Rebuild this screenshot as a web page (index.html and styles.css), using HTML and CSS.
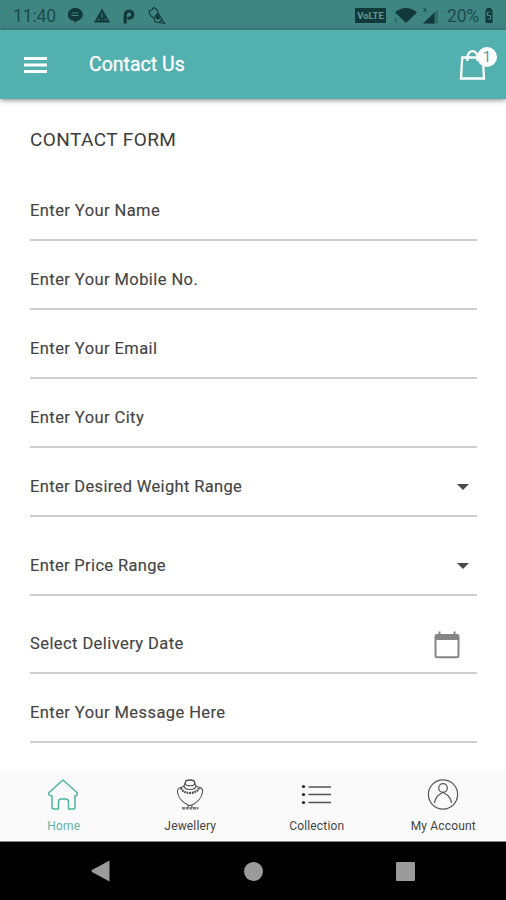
FILE: index.html
```html
<!DOCTYPE html>
<html lang="en">
<head>
<meta charset="utf-8">
<title>Contact Us</title>
<link rel="stylesheet" href="styles.css">
</head>
<body>
<div class="status">
  <span class="clock">11:40</span>
  <svg class="notices" width="98" height="20" viewBox="0 0 98 20">
    <path fill="#12393a" d="M7 2a7 6.500 0 0 1 1.500 13l-2 3v-3A7 6.500 0 0 1 7 2z"/>
    <path stroke="#3f8582" d="M3.500 7h7M3.500 9.500h7"/>
    <path fill="#12393a" d="M34 2.500l8 14H26z"/>
    <path stroke="#3f8582" stroke-width="1.200" d="M34 7v5M34 13.500v1.200M31 12.500l-1 2M37 12.500l1 2"/>
    <path fill="none" stroke="#12393a" stroke-width="3.200" d="M57.200 17.500V10q0-5 4-5a3.600 3.600 0 0 1 0 7.200H59.500"/>
    <path fill="none" stroke="#12393a" stroke-width="1.100" stroke-linejoin="round" d="M81 5l3-1 1.500-2.500 3.500 2 1 3.500-4 5-3-2-1.500-2.500zM90 7l4 6-3 3.500-4-.500-1-4M91 16.500l3-2.500 3 3.500-3-.500z"/>
    <path fill="#12393a" d="M87 10l3-2 2.500 4-3.500 2z"/>
  </svg>
  <span class="volte">VoLTE</span>
  <svg class="signals" width="46" height="20" viewBox="0 0 46 20">
    <path fill="#12393a" d="M1 6.500C7 .5 17 .5 23 6.500L12 17z"/>
    <path fill="#12393a" d="M1 12h1.500v5H1z" opacity=".4"/>
    <path fill="#12393a" opacity=".3" d="M44 3v14.500H29z"/>
    <path fill="#12393a" d="M40.500 6.500v11H29z"/>
    <path fill="none" stroke="#12393a" opacity=".7" d="M29.500 2l3 4M32.500 2l-3 4"/>
  </svg>
  <span class="percent">20%</span>
  <svg class="battery" width="10" height="16" viewBox="0 0 10 16">
    <path fill="#12393a" d="M3 0h4v1.500h1.500V15h-7V1.500H3z"/>
    <path fill="none" stroke="#3f8582" stroke-width="1.200" d="M6.500 4h-3v3.500h3V11h-3"/>
  </svg>
</div>
<header class="appbar">
  <svg class="burger" width="23" height="16" viewBox="0 0 23 16"><path stroke="#fff" stroke-width="2.800" d="M0 1.500h23M0 8h23M0 14.500h23"/></svg>
  <h1 class="title">Contact Us</h1>
  <div class="cart">
    <svg width="27" height="32" viewBox="0 0 27 32"><path fill="none" stroke="#fff" stroke-width="2.300" d="M3.200 8.500h20.600l1.200 21h-23zM8.500 12V8.500a5 6.300 0 0 1 10 0V12"/></svg>
    <span class="badge">1</span>
  </div>
</header>
<main class="form">
  <h2 class="heading">CONTACT FORM</h2>
  <div class="field"><span>Enter Your Name</span></div>
  <div class="field"><span>Enter Your Mobile No.</span></div>
  <div class="field"><span>Enter Your Email</span></div>
  <div class="field"><span>Enter Your City</span></div>
  <div class="field select"><span>Enter Desired Weight Range</span><i class="caret"></i></div>
  <div class="field select tall"><span>Enter Price Range</span><i class="caret"></i></div>
  <div class="field date"><span>Select Delivery Date</span>
    <svg class="calendar" width="26" height="28" viewBox="0 0 26 28"><path fill="none" stroke="#858585" stroke-width="2" d="M3 4h20q1.500 0 1.500 1.500v19q0 1.800-1.500 1.800H3q-1.500 0-1.500-1.800v-19Q1.500 4 3 4z"/><path fill="#858585" d="M1.500 3.500h23V9h-23zM4.500 0.500h2v4h-2zM19.500 0.500h2v4h-2z"/></svg>
  </div>
  <div class="field"><span>Enter Your Message Here</span></div>
</main>
<nav class="tabs">
  <div class="tab active">
    <svg width="32" height="32" viewBox="0 0 32 32"><path fill="none" stroke="#4fb3a5" stroke-width="1.500" stroke-linejoin="round" d="M16 1L30 13.500q1 1.500-.500 2.800l-1.500.700v11.500q0 1.500-1.500 1.500h-5v-7q0-3-2.500-3h-5q-2.500 0-2.500 3v7h-5q-1.500 0-1.500-1.500V17L2.500 16.300Q1 15 2 13.500z"/></svg>
    <span>Home</span>
  </div>
  <div class="tab">
    <svg width="32" height="32" viewBox="0 0 32 32"><g fill="none" stroke="#505050" stroke-width="1.100"><path d="M12 1.500q4-1.500 8 0l1.500 4.500q1 2 4.500 2.500 3 1 2.500 4.500C28 18.500 23 23.500 18 26q-2 1-4 0C9 23.500 4 18.500 3.500 13 3 9.500 6 8.500 7 8.500q2.500-.500 3.500-2.500z"/><ellipse cx="16" cy="4" rx="4.800" ry="2.800"/><path stroke-width="2.200" stroke-dasharray="1.800 .700" d="M7 9q2 4.700 9 5 7-.300 9-5"/><path d="M10 6.500q0 4 6 4t6-4M14.500 26.500l-1 2M17.500 26.500l1 2"/><path stroke-width="2.600" stroke-dasharray="3 .700" opacity=".75" d="M8 29.300h16.500"/></g></svg>
    <span>Jewellery</span>
  </div>
  <div class="tab">
    <svg width="32" height="32" viewBox="0 0 32 32"><path stroke="#555" stroke-width="1.300" d="M8.500 8H31M8.500 15.500H31M8.500 23.500H31"/><g fill="#222"><circle cx="3.500" cy="7.500" r="1.600"/><circle cx="3.500" cy="15.500" r="1.600"/><circle cx="3.500" cy="23.500" r="1.600"/></g></svg>
    <span>Collection</span>
  </div>
  <div class="tab">
    <svg width="32" height="32" viewBox="0 0 32 32"><g fill="none" stroke="#555" stroke-width="1.200"><circle cx="16" cy="15.500" r="14.600"/><circle cx="16" cy="9" r="4.300"/><path d="M7.500 24q1-6 5-8.500l3.500-2.300 3.500 2.300q4 2.500 5 8.500"/></g></svg>
    <span>My Account</span>
  </div>
</nav>
<footer class="system">
  <svg width="20" height="22" viewBox="0 0 20 22"><path fill="#9b9b9b" d="M18.500 .5v21L1 12Q0 11 1 10z"/></svg>
  <i class="circle"></i>
  <i class="square"></i>
</footer>
</body>
</html>
```
FILE: styles.css
```css
* { box-sizing: border-box; }
body {
  margin: 0;
  width: 506px;
  height: 900px;
  overflow: hidden;
  display: flex;
  flex-direction: column;
  background: #fff;
  font-family: Roboto, "Liberation Sans", sans-serif;
  color: #444;
}
svg { display: block; flex: none; }
.status {
  height: 30px;
  background: #3f8582;
  display: flex;
  align-items: center;
  padding: 1px 12px 0 13px;
  color: #1c4b4b;
  font-size: 17.5px;
}
.clock { width: 55px; letter-spacing: -.1px; }
.notices { margin-right: auto; }
.volte {
  width: 31px;
  height: 15px;
  background: #12393a;
  color: #5b9a97;
  font-size: 9.5px;
  line-height: 15px;
  font-weight: 700;
  text-align: center;
}
.signals { margin-left: 8px; }
.percent { width: 33px; margin: 0 4px 0 7px; letter-spacing: -.2px; }
.appbar {
  position: relative;
  height: 69px;
  background: #52b0af;
  box-shadow: 0 1px 5px rgba(0, 0, 0, .5);
  display: flex;
  align-items: center;
  padding: 0 9px 0 24px;
}
.title {
  margin: 0 auto 0 42px;
  font-size: 19.5px;
  font-weight: 400;
  color: #fff;
  -webkit-text-stroke: .3px #fff;
}
.cart { position: relative; width: 38px; height: 34px; }
.cart svg { margin-top: 1px; }
.badge {
  position: absolute;
  top: -1px;
  right: 0;
  width: 20px;
  height: 20px;
  border-radius: 50%;
  background: #fff;
  color: #52a09f;
  font-size: 15px;
  line-height: 20px;
  text-align: center;
}
.form { height: 671px; padding: 0 29px 0 30px; }
.heading {
  margin: 0;
  height: 73px;
  padding-top: 29px;
  font-size: 19px;
  line-height: 23px;
  font-weight: 400;
  letter-spacing: .42px;
  color: #3c3c3c;
}
.field {
  height: 69px;
  border-bottom: 2px solid #cecece;
  display: flex;
  align-items: flex-end;
  justify-content: space-between;
  padding-bottom: 18px;
  font-size: 16.5px;
  line-height: 20px;
  letter-spacing: .42px;
  -webkit-text-stroke: .15px #444;
}
.select { letter-spacing: .34px; }
.tall { height: 79px; }
.date { height: 78px; }
.caret {
  margin: 0 8px 7px 0;
  border: 6px solid transparent;
  border-top-color: #4a4a4a;
  border-bottom: 0;
}
.calendar { margin: 0 17px -5px 0; }
.tabs {
  height: 72px;
  background: #fafafa;
  border-bottom: 1px solid #8a8a8a;
  display: grid;
  grid-template-columns: repeat(4, 1fr);
}
.tab {
  display: flex;
  flex-direction: column;
  align-items: center;
  padding-top: 9px;
  font-size: 12px;
  line-height: 14px;
  letter-spacing: .15px;
}
.tab span { margin: 8px 0 0 1px; }
.active { color: #5fb5a8; }
.system {
  height: 58px;
  background: #000;
  display: flex;
  align-items: center;
  justify-content: space-between;
  padding: 0 91px;
}
.circle { width: 19px; height: 19px; border-radius: 50%; background: #9b9b9b; }
.square { width: 19px; height: 19px; border-radius: 1px; background: #9b9b9b; }
```
